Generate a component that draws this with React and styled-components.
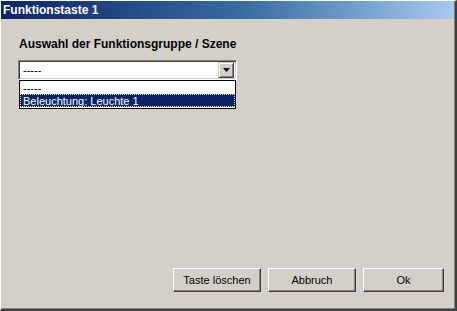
import React from 'react'
import styled, { createGlobalStyle } from 'styled-components'

const Global = createGlobalStyle`
  html, body {
    margin: 0;
    padding: 0;
    background: #d4d0c8;
  }
  * { box-sizing: border-box; }
`;

const Window = styled.div`
  width: 457px;
  height: 311px;
  background: #d4d0c8;
  border-top: 1px solid #ffffff;
  border-left: 1px solid #ffffff;
  border-right: 2px solid #404040;
  border-bottom: 2px solid #404040;
  box-shadow: inset -1px -1px 0 #808080;
  display: flex;
  flex-direction: column;
  font-family: "Liberation Sans", Arial, sans-serif;
`;

const TitleBar = styled.div`
  height: 18px;
  margin-right: 1px;
  background: linear-gradient(to right, #0a246a 0%, #3a6ea5 55%, #a6caf0 100%);
  color: #ffffff;
  font-weight: bold;
  font-size: 12px;
  line-height: 18px;
  padding-left: 2px;
  white-space: nowrap;
`;

const Content = styled.div`
  flex: 1;
  display: flex;
  flex-direction: column;
  padding: 18px 0 0 17px;
`;

const Label = styled.div`
  font-size: 12px;
  font-weight: bold;
  color: #000;
  line-height: 14px;
  margin-bottom: 9px;
  padding-left: 1px;
`;

const ComboWrap = styled.div`
  position: relative;
  width: 219px;
`;

const Combo = styled.div`
  height: 20px;
  background: #fff;
  border-top: 1px solid #808080;
  border-left: 1px solid #808080;
  border-right: 1px solid #ffffff;
  border-bottom: 1px solid #ffffff;
  box-shadow: inset 1px 1px 0 #404040, inset -1px -1px 0 #d4d0c8;
  display: flex;
  align-items: center;
  padding: 2px;
`;

const ComboText = styled.div`
  flex: 1;
  font-size: 11px;
  padding-left: 2px;
  color: #000;
`;

const DropButton = styled.div`
  width: 16px;
  height: 16px;
  background: #d4d0c8;
  border-top: 1px solid #d4d0c8;
  border-left: 1px solid #d4d0c8;
  border-right: 1px solid #404040;
  border-bottom: 1px solid #404040;
  box-shadow: inset 1px 1px 0 #ffffff, inset -1px -1px 0 #808080;
  display: flex;
  align-items: center;
  justify-content: center;
`;

const List = styled.div`
  position: absolute;
  top: 20px;
  left: 1px;
  width: 217px;
  background: #fff;
  border: 1px solid #000;
  padding-bottom: 1px;
`;

const Item = styled.div`
  height: 13px;
  font-size: 11px;
  line-height: 12px;
  padding-left: 2px;
  color: ${p => (p.selected ? '#fff' : '#000')};
  background: ${p => (p.selected ? '#0a246a' : '#fff')};
  border: 1px dotted ${p => (p.selected ? '#f0e68c' : 'transparent')};
`;

const Footer = styled.div`
  margin-top: auto;
  display: flex;
  justify-content: flex-end;
  gap: 7px;
  padding: 0 11px 17px 0;
`;

const Button = styled.div`
  width: ${p => p.w || 88}px;
  height: 24px;
  background: #d4d0c8;
  border-top: 1px solid #ffffff;
  border-left: 1px solid #ffffff;
  border-right: 1px solid #404040;
  border-bottom: 1px solid #404040;
  box-shadow: inset -1px -1px 0 #808080;
  font-size: 11px;
  color: #000;
  display: flex;
  align-items: center;
  justify-content: center;
`;

const App = () => {
  return (
    <>
      <Global />
      <Window>
        <TitleBar>Funktionstaste 1</TitleBar>
        <Content>
          <Label>Auswahl der Funktionsgruppe / Szene</Label>
          <ComboWrap>
            <Combo>
              <ComboText>-----</ComboText>
              <DropButton>
                <svg width="7" height="4" viewBox="0 0 7 4">
                  <path d="M0 0h7L3.5 4z" fill="#000" />
                </svg>
              </DropButton>
            </Combo>
            <List>
              <Item>-----</Item>
              <Item selected>Beleuchtung: Leuchte 1</Item>
            </List>
          </ComboWrap>
          <Footer>
            <Button>Taste löschen</Button>
            <Button>Abbruch</Button>
            <Button w={81}>Ok</Button>
          </Footer>
        </Content>
      </Window>
    </>
  )
}

export default App
